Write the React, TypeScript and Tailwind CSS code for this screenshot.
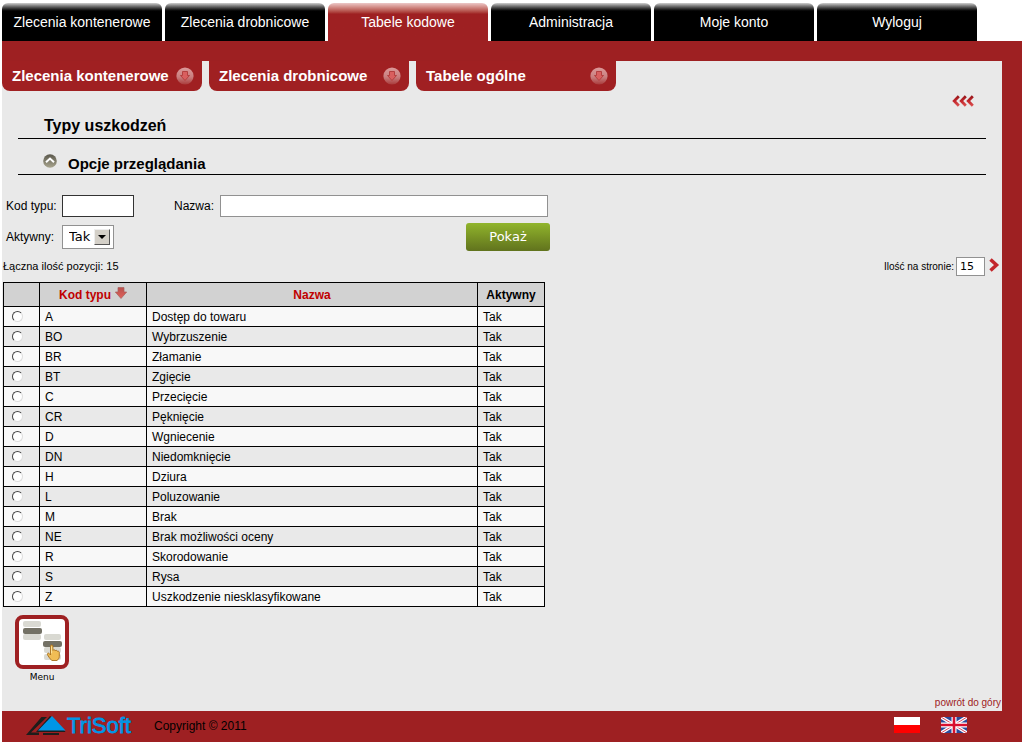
const tabs = [
  "Zlecenia kontenerowe",
  "Zlecenia drobnicowe",
  "Tabele kodowe",
  "Administracja",
  "Moje konto",
  "Wyloguj",
];

const submenus = ["Zlecenia kontenerowe", "Zlecenia drobnicowe", "Tabele ogólne"];

const rows = [
  { code: "A", name: "Dostęp do towaru" },
  { code: "BO", name: "Wybrzuszenie" },
  { code: "BR", name: "Złamanie" },
  { code: "BT", name: "Zgięcie" },
  { code: "C", name: "Przecięcie" },
  { code: "CR", name: "Pęknięcie" },
  { code: "D", name: "Wgniecenie" },
  { code: "DN", name: "Niedomknięcie" },
  { code: "H", name: "Dziura" },
  { code: "L", name: "Poluzowanie" },
  { code: "M", name: "Brak" },
  { code: "NE", name: "Brak możliwości oceny" },
  { code: "R", name: "Skorodowanie" },
  { code: "S", name: "Rysa" },
  { code: "Z", name: "Uszkodzenie niesklasyfikowane" },
];

function RoundArrow() {
  return (
    <svg width="18" height="18" viewBox="0 0 18 18" aria-hidden="true">
      <defs>
        <linearGradient id="roundArrow" x1="0" y1="0" x2="0" y2="1">
          <stop offset="0" stopColor="#dc9999" />
          <stop offset="0.55" stopColor="#c98080" />
          <stop offset="1" stopColor="#a93a3a" />
        </linearGradient>
      </defs>
      <circle cx="9" cy="9" r="8.6" fill="url(#roundArrow)" />
      <path d="M6.500 4.500h5v4h2L9 13.500 4.500 8.500h2z" fill="#d95f5f" stroke="#b44040" />
    </svg>
  );
}

function TripleChevron() {
  return (
    <svg width="22" height="12" viewBox="0 0 22 12" aria-hidden="true">
      <defs>
        <linearGradient id="chevrons" gradientUnits="userSpaceOnUse" x1="0" y1="0" x2="0" y2="12">
          <stop offset="0" stopColor="#8f1519" />
          <stop offset="0.5" stopColor="#c3262b" />
          <stop offset="1" stopColor="#df5a58" />
        </linearGradient>
      </defs>
      <g fill="none" stroke="url(#chevrons)" strokeWidth="2.8">
        <path d="M6.800 1.200 2.200 6l4.600 4.800" />
        <path d="M13.800 1.200 9.200 6l4.600 4.800" />
        <path d="M20.800 1.200 16.200 6l4.600 4.800" />
      </g>
    </svg>
  );
}

function CollapseIcon() {
  return (
    <svg width="14" height="14" viewBox="0 0 14 14" aria-hidden="true">
      <defs>
        <linearGradient id="collapse" x1="0" y1="0" x2="0" y2="1">
          <stop offset="0" stopColor="#59574b" />
          <stop offset="1" stopColor="#aaa68f" />
        </linearGradient>
      </defs>
      <circle cx="7" cy="7" r="6.8" fill="url(#collapse)" />
      <path d="M3 8.2 7 4.6l4 3.600" fill="none" stroke="#fff" strokeWidth="2" />
    </svg>
  );
}

function SortArrow() {
  return (
    <svg width="12" height="12" viewBox="0 0 12 12" className="mb-1" aria-hidden="true">
      <defs>
        <linearGradient id="sort" x1="0" y1="0" x2="0" y2="1">
          <stop offset="0" stopColor="#b9504c" />
          <stop offset="1" stopColor="#e0625c" />
        </linearGradient>
      </defs>
      <path d="M3 .5h6v4.500h2.700L6 11.500.3 5H3z" fill="url(#sort)" stroke="#a8605c" strokeWidth="0.7" />
    </svg>
  );
}

function MenuIcon() {
  return (
    <svg width="46" height="46" viewBox="0 0 46 46" aria-hidden="true">
      <g fill="#d9d9d2">
        <rect x="4" y="2" width="18" height="6" rx="2" />
        <rect x="4" y="15" width="18" height="6" rx="2" />
        <rect x="25" y="15" width="17" height="6" rx="2" />
        <rect x="25" y="28" width="17" height="6" rx="2" />
        <rect x="25" y="35" width="17" height="6" rx="2" />
      </g>
      <rect x="4" y="9" width="19" height="6" rx="2" fill="#737165" />
      <rect x="24" y="22" width="19" height="6" rx="2" fill="#737165" />
      <path
        d="M31.500 27.200c0-1.700 2.400-1.700 2.400 0v4.200c.4-1 2.100-.9 2.300.3.700-.7 2-.4 2.200.6.800-.4 1.900.1 1.900 1.100v4.100c0 2-1.200 3-2.300 4h-5.200c-1.500-1.600-3.300-3.400-4.300-5.700-.6-1.600 1.100-2.300 2-1.100l1 1.300z"
        fill="#f0bd55"
        stroke="#a66e1d"
        strokeWidth="0.9"
      />
      <path d="M32.600 27.500v6.800" stroke="#fff0b5" strokeWidth="0.8" />
    </svg>
  );
}

function Logo() {
  return (
    <svg width="106" height="24" viewBox="0 0 106 24" role="img" aria-label="TriSoft">
      <path d="M0 21 15.500 3H21L5 18.500h8V21z" fill="#1d1d1b" />
      <path d="M10 18 24 2l2 1-12 13h24l1.500 2z" fill="#1d1d1b" />
      <path d="M17 19h16v2H17z" fill="#1d1d1b" />
      <path d="M12 16.500 26 2l13.500 14.500z" fill="#0096e6" />
      <text
        x="41"
        y="19"
        fill="#0096e6"
        stroke="#0096e6"
        strokeWidth="0.8"
        fontFamily="Liberation Sans, Arial, sans-serif"
        fontSize="22"
      >
        TriSoft
      </text>
    </svg>
  );
}

function PolishFlag() {
  return (
    <svg width="26" height="16" viewBox="0 0 26 16" aria-hidden="true">
      <path fill="#fff" d="M0 0h26v8H0z" />
      <path fill="#f00" d="M0 8h26v8H0z" />
    </svg>
  );
}

function BritishFlag() {
  return (
    <svg width="26" height="16" viewBox="0 0 26 16" aria-hidden="true">
      <path fill="#2a4b9b" d="M0 0h26v16H0z" />
      <path d="m0 0 26 16M26 0 0 16" stroke="#fff" strokeWidth="3.400" />
      <path d="m0 0 26 16M26 0 0 16" stroke="#d6455a" strokeWidth="1" />
      <path d="M13 0v16M0 8h26" stroke="#fff" strokeWidth="5" />
      <path d="M13 0v16M0 8h26" stroke="#d8102f" strokeWidth="2.600" />
    </svg>
  );
}

function MainTabs() {
  return (
    <nav className="flex gap-[3px]">
      {tabs.map((tab) => (
        <a
          key={tab}
          href="#"
          className={
            tab === "Tabele kodowe"
              ? "flex h-[38px] w-40 justify-center rounded-t-md bg-[#9e2022] bg-linear-to-b from-[#ecc8c8] to-[#9e2022] to-[11px] pt-[9px] text-sm text-white"
              : "flex h-[38px] w-40 justify-center rounded-t-md bg-black bg-linear-to-b from-[#d0d0d0] to-black to-[9px] pt-[9px] text-sm text-white"
          }
        >
          {tab}
        </a>
      ))}
    </nav>
  );
}

function Filters() {
  return (
    <form className="mt-5 flex flex-col gap-1.5 pl-1 text-xs" onSubmit={(e) => e.preventDefault()}>
      <div className="flex items-center">
        <label htmlFor="code" className="w-14">Kod typu:</label>
        <input id="code" className="h-[22px] w-18 border border-[#333] bg-white px-1 outline-none" />
        <label htmlFor="name" className="ml-10 w-[46px]">Nazwa:</label>
        <input id="name" className="h-[22px] w-[328px] border border-[#919191] bg-white px-1 outline-none" />
      </div>
      <div className="flex items-center">
        <label htmlFor="active" className="w-14">Aktywny:</label>
        <div className="relative">
          <select
            id="active"
            className="block h-6 w-[52px] appearance-none border border-[#919191] bg-white pl-1.5 font-['DejaVu_Sans',sans-serif] text-[13px] outline-none"
          >
            <option>Tak</option>
            <option>Nie</option>
          </select>
          <span className="pointer-events-none absolute top-1 right-1 flex size-4 items-center justify-center border border-t-[#eee] border-r-[#555] border-b-[#555] border-l-[#eee] bg-[#d4d0c8]">
            <svg width="8" height="4" viewBox="0 0 8 4" aria-hidden="true">
              <path d="M0 0h8L4 4z" />
            </svg>
          </span>
        </div>
        <button
          type="submit"
          className="ml-[352px] h-7 w-21 rounded-[3px] bg-linear-to-b from-[#91b52c] to-[#61731d] font-['DejaVu_Sans',sans-serif] text-[13px] text-white"
        >
          Pokaż
        </button>
      </div>
    </form>
  );
}

function DamageTable() {
  return (
    <table className="ml-px w-[542px] table-fixed border-collapse text-xs">
      <colgroup>
        <col className="w-9" />
        <col className="w-[107px]" />
        <col />
        <col className="w-[67px]" />
      </colgroup>
      <thead>
        <tr className="h-6 bg-[#d2d2d2]">
          <th className="border border-black p-0" aria-label="Wybór" />
          <th className="border border-black p-0">
            <a href="#" className="flex items-center justify-center gap-1 text-[#c00000]">
              Kod typu
              <SortArrow />
            </a>
          </th>
          <th className="border border-black p-0">
            <a href="#" className="text-[#c00000]">Nazwa</a>
          </th>
          <th className="border border-black p-0">Aktywny</th>
        </tr>
      </thead>
      <tbody>
        {rows.map((row) => (
          <tr key={row.code} className="h-5 odd:bg-[#f8f8f8] even:bg-[#e9e9e9]">
            <td className="border border-black p-0">
              <input
                type="radio"
                name="damage"
                aria-label={row.code}
                className="ml-2 block size-[11px] appearance-none rounded-full border border-t-[#444] border-r-[#ddd] border-b-[#ddd] border-l-[#444] bg-white checked:bg-black"
              />
            </td>
            <td className="border border-black px-[5px] py-0">{row.code}</td>
            <td className="border border-black px-[5px] py-0">{row.name}</td>
            <td className="border border-black px-[5px] py-0">Tak</td>
          </tr>
        ))}
      </tbody>
    </table>
  );
}

export default function App() {
  return (
    <div className="bg-white pt-[3px] pr-1 pb-1 pl-0.5 font-['Liberation_Sans',Arial,sans-serif] text-black">
      <MainTabs />
      <div className="bg-[#9e2022] pt-5 pr-5">
        <main className="bg-[#e9e9e9]">
          <nav className="flex gap-[7px]">
            {submenus.map((item) => (
              <a
                key={item}
                href="#"
                className="flex h-[30px] w-50 items-center justify-between rounded-b-lg bg-[#a02022] pr-2 pl-2.5 text-[15px] font-bold text-white"
              >
                {item}
                <RoundArrow />
              </a>
            ))}
          </nav>
          <div className="flex justify-end pt-1 pr-7">
            <button type="button" aria-label="Wstecz">
              <TripleChevron />
            </button>
          </div>
          <h1 className="mx-4 border-b border-black pt-[9px] pb-0.5 pl-[26px] text-base leading-5 font-bold">
            Typy uszkodzeń
          </h1>
          <h2 className="mx-4 flex items-start border-b border-black pt-[15px] pl-[25px] text-[15px] leading-5 font-bold">
            <button type="button" aria-label="Zwiń" className="mr-[11px]">
              <CollapseIcon />
            </button>
            Opcje przeglądania
          </h2>
          <Filters />
          <div className="flex h-[31px] items-center justify-between pr-0.5 pl-px text-[10px]">
            <span className="text-[11px]">Łączna ilość pozycji: 15</span>
            <div className="flex items-center">
              <label htmlFor="pageSize" className="mr-0.5">Ilość na stronie:</label>
              <input
                id="pageSize"
                defaultValue="15"
                className="h-[19px] w-[29px] border border-[#919191] bg-white px-[3px] font-['DejaVu_Sans',sans-serif] text-[11px] outline-none"
              />
              <button type="button" aria-label="Następna strona" className="mb-1 ml-1">
                <svg width="11" height="14" viewBox="0 0 11 14" aria-hidden="true">
                  <path d="M1.500 1.500 7.500 7l-6 5.500" fill="none" stroke="#c3262b" strokeWidth="3.500" />
                </svg>
              </button>
            </div>
          </div>
          <DamageTable />
          <div className="flex pt-2 pl-[13px]">
            <button type="button" className="flex flex-col items-center gap-0.5 font-['DejaVu_Sans',sans-serif] text-[9px]">
              <span className="flex size-[54px] items-center justify-center rounded-lg border-4 border-[#9e2022] bg-white">
                <MenuIcon />
              </span>
              Menu
            </button>
          </div>
          <div className="flex justify-end pt-2.5 pr-px text-[10px] leading-4">
            <a href="#" className="text-[#9e2022]">powrót do góry</a>
          </div>
        </main>
      </div>
      <footer className="flex h-[31px] items-center bg-[#9e2022] pr-[55px] pl-6">
        <Logo />
        <span className="ml-[22px] text-xs">Copyright © 2011</span>
        <div className="mb-[3px] ml-auto flex gap-[21px]">
          <button type="button" aria-label="Polski">
            <PolishFlag />
          </button>
          <button type="button" aria-label="English">
            <BritishFlag />
          </button>
        </div>
      </footer>
    </div>
  );
}
